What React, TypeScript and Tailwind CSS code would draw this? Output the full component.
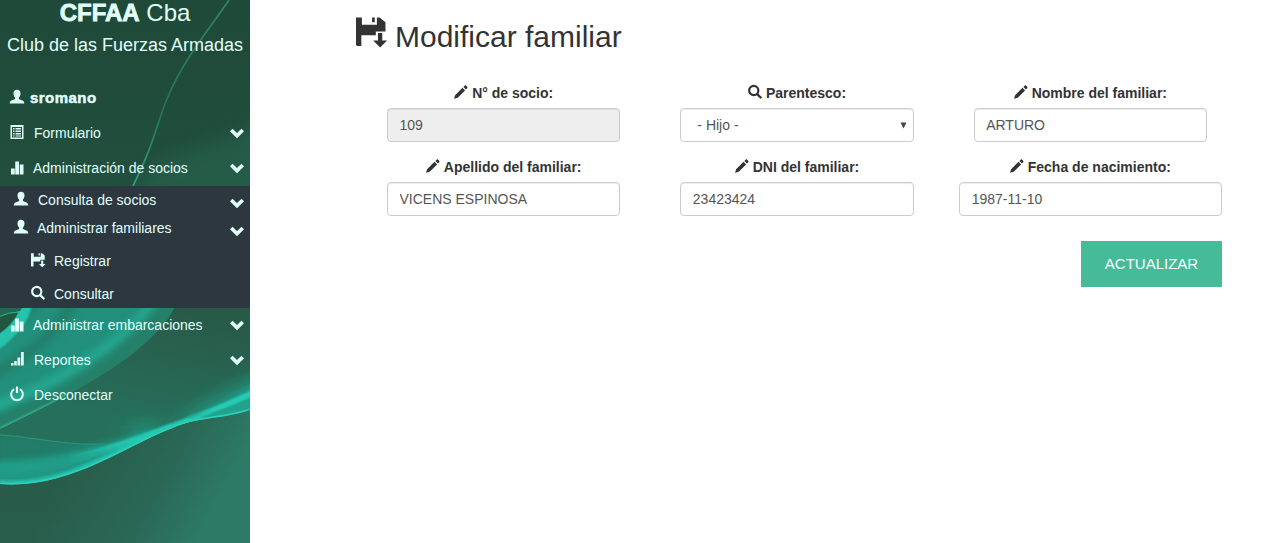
import type { ReactNode } from "react";

type IconProps = { className?: string };

function Icon({ className = "size-3.5", children }: IconProps & { children: ReactNode }) {
  return (
    <svg viewBox="0 0 28 28" fill="currentColor" className={`shrink-0 overflow-visible ${className}`} aria-hidden="true">
      {children}
    </svg>
  );
}

const UserIcon = (p: IconProps) => (
  <Icon {...p}>
    <path d="M14 -.5c4.500 0 7 2.500 7 7 0 3.500-1 6.500-3.200 8.500v3l8.200 3.500c1.500 1 2.500 2 2.500 5.500H-.5c0-3.500 1-4.500 2.500-5.500L10.200 18v-3C8 13 7 10 7 6.500c0-4.500 2.500-7 7-7z" />
  </Icon>
);
const ListIcon = (p: IconProps) => (
  <Icon {...p}>
    <path fillRule="evenodd" d="M1 0h26v28H1zM4 4v21h20V4z" />
    <path d="M6 6h3v3H6zM11 6h11v3H11zM6 11h3v3H6zM11 11h11v3H11zM6 16h3v3H6zM11 16h11v3H11zM6 21h3v2H6zM11 21h11v2H11z" />
  </Icon>
);
const StatsIcon = (p: IconProps) => (
  <Icon {...p}>
    <path d="M2 15h7.500v12H2zM10.500 1H18v26h-7.500zM19.500 7H27v20h-7.500z" />
  </Icon>
);
const SignalIcon = (p: IconProps) => (
  <Icon {...p}>
    <path d="M2 22h5v5H2zM8.500 18h5v9h-5zM15 11h5.500v16H15zM22 0h5.500v27H22z" />
  </Icon>
);
const PowerIcon = (p: IconProps) => (
  <Icon {...p}>
    <path d="M8.500 4.300A11.700 11.700 0 1 0 19.500 4.300" fill="none" stroke="currentColor" strokeWidth="4" />
    <path d="M11.800 -1h4.400v13h-4.400z" />
  </Icon>
);
const SearchIcon = (p: IconProps) => (
  <Icon {...p}>
    <circle cx="11.500" cy="11" r="9.200" fill="none" stroke="currentColor" strokeWidth="4.400" />
    <path d="M16.500 20l3.500-3.500 7.500 7.500c.6.6.6 1 0 1.500L26 27c-.5.600-1.200.6-1.700 0z" />
  </Icon>
);
const PencilIcon = (p: IconProps) => (
  <Icon {...p}>
    <path d="M0 27.500L2.200 20.500 17 5.700l5.200 5.200L7.500 25.500zM18.800 3.900l2.500-2.500c1-1 2-1 3 0l2 2c1 1 1 2 0 3l-2.500 2.500z" />
  </Icon>
);
const SaveIcon = (p: IconProps) => (
  <Icon {...p}>
    <path d="M0 .5h5.500v6.800h14V.5h2.500l5.500 4.500v8.500H18.500v3.500H5v10H1L0 26z" />
    <path d="M15 .5h2.500v4.500H15zM20.500 15h4v7h4.500L22.500 28.500 16 22h4.500z" />
  </Icon>
);
const ChevronIcon = (p: IconProps) => (
  <Icon {...p}>
    <path d="M5 5.500L14 14l9-8.500 5 5L14 24.500 0 10.500z" />
  </Icon>
);

function Waves() {
  return (
    <svg viewBox="0 0 250 543" className="absolute inset-0 h-full w-full" aria-hidden="true">
      <defs>
        <linearGradient id="base" x1="0" y1="0" x2="0" y2="1">
          <stop offset="0" stopColor="#1f4938" />
          <stop offset=".3" stopColor="#214e3d" />
          <stop offset=".6" stopColor="#285746" />
          <stop offset="1" stopColor="#285c4b" />
        </linearGradient>
        <linearGradient id="right" x1="0" y1="0" x2="1" y2=".3">
          <stop offset=".35" stopColor="#2d7c67" stopOpacity="0" />
          <stop offset=".75" stopColor="#2d7c67" stopOpacity=".4" />
          <stop offset="1" stopColor="#2d7c67" stopOpacity=".95" />
        </linearGradient>
        <linearGradient id="between" gradientUnits="userSpaceOnUse" x1="180" y1="310" x2="155" y2="430">
          <stop offset="0" stopColor="#26705b" stopOpacity="0" />
          <stop offset="1" stopColor="#26705b" />
        </linearGradient>
        <linearGradient id="fade" gradientUnits="userSpaceOnUse" x1="230" y1="0" x2="135" y2="190">
          <stop offset="0" stopColor="#298a70" />
          <stop offset=".6" stopColor="#267359" />
          <stop offset="1" stopColor="#31a788" />
        </linearGradient>
        <linearGradient id="streak" gradientUnits="userSpaceOnUse" x1="60" y1="0" x2="150" y2="0">
          <stop offset="0" stopColor="#25cdb6" stopOpacity="0" />
          <stop offset="1" stopColor="#25cdb6" />
        </linearGradient>
        <clipPath id="fan">
          <path d="M0 300H178Q172 315 163 325C140 352 110 371 80 388Q50 405 0 429z" />
        </clipPath>
        <clipPath id="above">
          <path d="M0 300H250V410C220 420 200 416 172 428C125 446 70 489 0 484z" />
        </clipPath>
        <filter id="blur1" x="-20%" y="-20%" width="140%" height="140%"><feGaussianBlur stdDeviation="1" /></filter>
        <filter id="blur4" x="-20%" y="-30%" width="140%" height="160%"><feGaussianBlur stdDeviation="4" /></filter>
        <filter id="blur9" x="-30%" y="-50%" width="160%" height="200%"><feGaussianBlur stdDeviation="9" /></filter>
      </defs>
      <rect width="250" height="543" fill="url(#base)" />
      <path d="M133 200C155 140 195 160 270 120V200z" fill="#25654f" opacity=".6" filter="url(#blur9)" />
      <path d="M229 0C203 38 178 66 162 112 151 146 147 157 133 186" fill="none" stroke="url(#fade)" strokeWidth="1.600" />
      <rect y="400" width="250" height="143" fill="url(#right)" />

      <g clipPath="url(#above)">
        <rect y="300" width="250" height="190" fill="#285a48" />
        <rect y="300" width="250" height="190" fill="url(#between)" />
        <path d="M130 450C170 430 190 405 270 372V425H130z" fill="#23947e" filter="url(#blur9)" />
        <path d="M0 435C35 437 65 446 105 444 160 440 200 415 250 392V500H0z" fill="#237c68" filter="url(#blur1)" />
        <path d="M-20 462C50 468 105 449 150 435L180 430 100 475-20 492z" fill="#219884" filter="url(#blur4)" />
        <path d="M-10 466C55 468 95 447 150 438S215 413 260 387" fill="none" stroke="#22b39c" strokeWidth="7" opacity=".65" filter="url(#blur4)" />
        <path d="M50 467C120 447 200 418 260 391" fill="none" stroke="url(#streak)" strokeWidth="7" opacity=".85" filter="url(#blur1)" />
        <path d="M190 420C215 417 235 411 255 402" fill="none" stroke="#23a28c" strokeWidth="10" filter="url(#blur1)" />
        <path d="M70 456C150 440 210 413 255 391" fill="none" stroke="url(#streak)" strokeWidth="3" filter="url(#blur1)" />
        <path d="M0 483C70 488 120 446 172 427" fill="none" stroke="#27c8b1" strokeWidth="6" opacity=".8" filter="url(#blur1)" />
        <path d="M0 484C70 489 125 446 172 428 200 416 220 420 250 410" fill="none" stroke="#2ad2bb" strokeWidth="3" />
        <path d="M0 435C35 437 65 446 105 444" fill="none" stroke="#289880" strokeWidth="1" />
      </g>

      <g clipPath="url(#fan)">
        <rect y="300" width="180" height="135" fill="#258069" />
        <path d="M-10 350L55 295H148C115 347 60 382-10 412z" fill="#22907b" filter="url(#blur4)" />
        <path d="M75 295C60 335 28 354-10 377" fill="none" stroke="#217b67" strokeWidth="10" filter="url(#blur4)" />
        <path d="M-10 409C55 385 118 350 158 295" fill="none" stroke="#25b39c" strokeWidth="9" opacity=".9" filter="url(#blur4)" />
        <path d="M-10 349C12 332 24 320 27 300" fill="none" stroke="#25c3ac" strokeWidth="12" filter="url(#blur1)" />
        <path d="M0 429Q40 410 70 394" fill="none" stroke="#38c5ac" strokeWidth="3" opacity=".8" filter="url(#blur1)" />
      </g>
      <path d="M-2 308H22L20 311Q8 313-2 317z" fill="#25664f" />
      <path d="M-2 317Q9 312 19 312Q13 325-2 335z" fill="#235640" stroke="#27b8a0" strokeWidth="1" />
    </svg>
  );
}

function MenuRow({ icon, label, className, chevron = "" }: { icon: ReactNode; label: string; className: string; chevron?: string }) {
  return (
    <div className={`flex items-center pr-[6px] ${className}`}>
      {icon}
      <span className="whitespace-nowrap">{label}</span>
      {chevron && <ChevronIcon className={`ml-auto ${chevron}`} />}
    </div>
  );
}

function Field({ icon, label, wide = false, children }: { icon: ReactNode; label: string; wide?: boolean; children: ReactNode }) {
  return (
    <div className={wide ? "px-[15.500px]" : "px-[30px]"}>
      <div className="flex h-[25px] items-start justify-center gap-1 text-sm leading-5 font-bold">
        {icon}
        <span className="whitespace-nowrap">{label}</span>
      </div>
      {children}
    </div>
  );
}

const inputClass =
  "block h-[34px] w-full rounded border border-[#ccc] px-[11.500px] text-sm text-[#555] shadow-[inset_0_1px_1px_rgba(0,0,0,0.075)] outline-none";

export default function App() {
  return (
    <div className="flex h-[543px] w-full overflow-hidden bg-white font-['Liberation_Sans',Arial,sans-serif] text-[#333]">
      <aside className="relative w-[250px] shrink-0 overflow-hidden text-sm text-[#e0fffa]">
        <Waves />
        <div className="relative">
          <div className="h-[28px] text-center text-[24px] leading-[25px]">
            <b className="[-webkit-text-stroke:0.800px]">CFFAA</b> Cba
          </div>
          <div className="h-[52px] text-center text-lg leading-[34px] whitespace-nowrap">Club de las Fuerzas Armadas</div>
          <div className="flex h-[35px] items-center gap-1.5 pl-[10px]">
            <UserIcon className="size-3.5 -translate-y-px" />
            <b className="text-[15px] tracking-[0.450px] [-webkit-text-stroke:0.500px]">sromano</b>
          </div>
          <MenuRow className="h-[35px] gap-[10px] pl-[10px]" icon={<ListIcon className="size-3.5 -translate-y-px" />} label="Formulario" chevron="size-3.5" />
          <MenuRow className="h-[36px] gap-[9px] pl-[10px]" icon={<StatsIcon />} label="Administración de socios" chevron="size-3.5" />
          <div className="h-[122px] bg-[#2c3740]">
            <MenuRow className="h-[28px] gap-[10px] pl-[14px]" icon={<UserIcon className="size-3.5 -translate-y-px" />} label="Consulta de socios" chevron="size-3.5 translate-y-[3px]" />
            <MenuRow className="h-[28px] gap-[9px] pl-[14px]" icon={<UserIcon className="size-3.5 -translate-y-px" />} label="Administrar familiares" chevron="size-3.5 translate-y-[3px]" />
            <MenuRow className="h-[38px] gap-[9px] pl-[31px]" icon={<SaveIcon className="size-3.5 -translate-y-px" />} label="Registrar" />
            <MenuRow className="h-[28px] gap-[9px] pl-[31px]" icon={<SearchIcon className="size-3.5 -translate-y-px" />} label="Consultar" />
          </div>
          <MenuRow className="h-[34px] gap-[9px] pl-[10px]" icon={<StatsIcon />} label="Administrar embarcaciones" chevron="size-3.5" />
          <MenuRow className="h-[36px] gap-[10px] pl-[10px]" icon={<SignalIcon className="size-3.5 -translate-y-px" />} label="Reportes" chevron="size-3.5" />
          <MenuRow className="h-[34px] gap-[10px] pl-[10px]" icon={<PowerIcon className="size-3.5 -translate-y-px" />} label="Desconectar" />
        </div>
      </aside>

      <main className="w-[987px] pt-[17px] pl-[106px]">
        <h1 className="flex h-[66px] items-start gap-[9px] text-[30px] leading-[39px]">
          <SaveIcon className="size-[30px]" />
          Modificar familiar
        </h1>
        <form className="grid grid-cols-3 gap-y-[15px] pl-px">
          <Field icon={<PencilIcon className="mt-[2px] size-3.5" />} label="N° de socio:">
            <input className={`${inputClass} bg-[#eee]`} defaultValue="109" readOnly />
          </Field>
          <Field icon={<SearchIcon className="mt-[2px] size-3.5" />} label="Parentesco:">
            <div className={`${inputClass} !flex items-center justify-between !pr-[6px] !pl-4`}>
              <span>- Hijo -</span>
              <svg viewBox="0 0 7 7" className="size-[7px]" fill="#444" aria-hidden="true">
                <path d="M.5 .5h6L3.500 6.500z" />
              </svg>
            </div>
          </Field>
          <Field icon={<PencilIcon className="mt-[2px] size-3.5" />} label="Nombre del familiar:">
            <input className={inputClass} defaultValue="ARTURO" />
          </Field>
          <Field icon={<PencilIcon className="mt-[2px] size-3.5" />} label="Apellido del familiar:">
            <input className={inputClass} defaultValue="VICENS ESPINOSA" />
          </Field>
          <Field icon={<PencilIcon className="mt-[2px] size-3.5" />} label="DNI del familiar:">
            <input className={inputClass} defaultValue="23423424" />
          </Field>
          <Field wide icon={<PencilIcon className="mt-[2px] size-3.5" />} label="Fecha de nacimiento:">
            <input className={inputClass} defaultValue="1987-11-10" />
          </Field>
        </form>
        <div className="flex justify-end pt-[25px] pr-[15px]">
          <button type="button" className="h-[46px] w-[141px] bg-[#45bb98] text-[15px] text-white">
            ACTUALIZAR
          </button>
        </div>
      </main>
    </div>
  );
}
